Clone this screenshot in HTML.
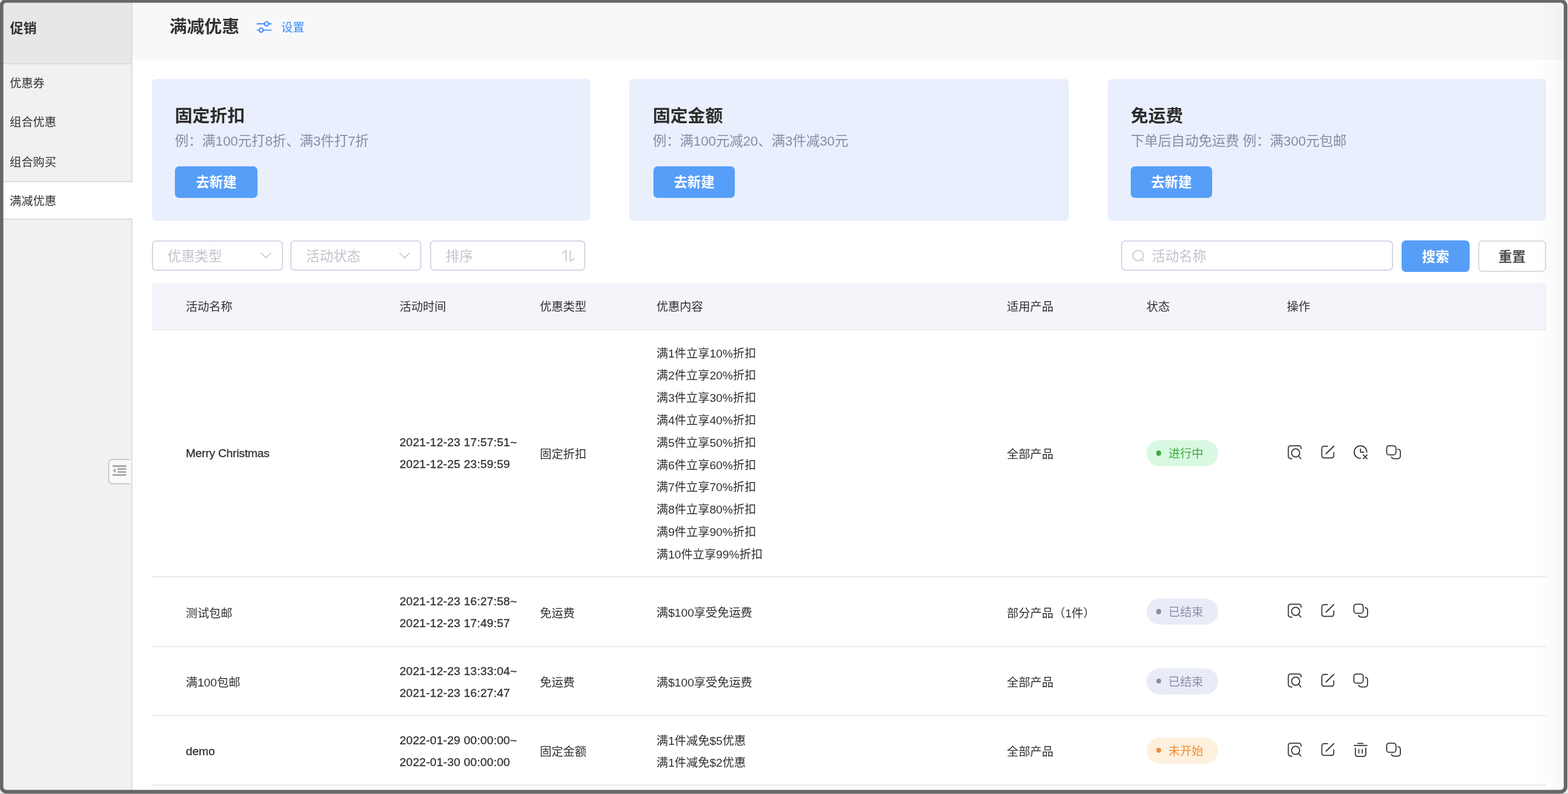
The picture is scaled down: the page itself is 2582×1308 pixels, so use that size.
<!DOCTYPE html>
<html lang="zh-CN">
<head>
<meta charset="utf-8">
<title>满减优惠</title>
<style>
*{box-sizing:border-box;margin:0;padding:0}
html,body{width:2582px;height:1308px;overflow:hidden;background:#f0f0f0}
body{position:relative;font-family:"Liberation Sans","Noto Sans CJK SC",sans-serif;color:#303030;font-size:19.2px}
.abs{position:absolute}
#app{will-change:transform;position:absolute;left:0;top:0;width:2582px;height:1308px;overflow:hidden;background:#fff}
#frame{position:absolute;left:0;top:0;width:2582px;height:1308px;z-index:50;pointer-events:none}
#edge{position:absolute;right:7px;top:0;width:44px;height:1308px;background:linear-gradient(to right,rgba(0,0,0,0),rgba(0,0,0,0.012) 45%,rgba(0,0,0,0.026));z-index:40;pointer-events:none}
/* sidebar */
#side{position:absolute;left:0;top:0;width:218px;height:1308px;background:#f1f1f1;border-right:2px solid #d9dce4}
#side .hd{position:absolute;left:0;top:0;width:216px;height:106px;background:#e8e6e7;border-bottom:2px solid #d9dce4}
#side .hd span{position:absolute;left:16.5px;top:31px;font-size:22px;font-weight:700;line-height:32px;color:#333}
#side .it{position:absolute;left:0;width:216px;height:65px;line-height:66px;padding-left:16px;font-size:19.2px;color:#333}
#side .it.on{width:218px;background:#fff;border-top:2px solid #d9dce4;border-bottom:2px solid #d9dce4;line-height:64px;height:64px}
#fold{position:absolute;left:178px;top:756px;width:36px;height:42px;border:2px solid #c9c9c9;border-right:none;border-radius:7px 3px 3px 7px;background:#f9f9f9}
#fold:after{content:"";position:absolute;left:34px;top:0;width:2px;height:38px;background:#f8f8f8}
/* header */
#top{position:absolute;left:218px;top:0;width:2364px;height:98px;background:#f8f8f8}
#top h1{position:absolute;left:61px;top:23px;font-size:28.8px;line-height:42px;font-weight:700;color:#333}
#top .set{position:absolute;left:245px;top:31px;font-size:19.2px;line-height:30px;color:#3b8cfe}
/* cards */
.card{position:absolute;top:130px;height:234px;background:#e9effd;border-radius:7px}
.card h2{position:absolute;left:38px;top:40px;font-size:28.8px;line-height:42px;font-weight:700;color:#2c2c2c;white-space:nowrap}
.card p{position:absolute;left:38px;top:87px;font-size:22.4px;line-height:32px;color:#878da6;white-space:nowrap;letter-spacing:-.1px}
.btn{position:absolute;background:#579ef8;color:#fff;font-weight:700;font-size:22.4px;text-align:center;border-radius:7px;white-space:nowrap}
.card .btn{left:38px;top:144px;height:52px;line-height:54px;width:134px}
/* filters */
.sel{position:absolute;top:396px;height:50px;border:2px solid #d4d8e4;border-radius:7px;background:#fff;font-size:22.4px;color:#c0c4cc;line-height:49px;padding-left:24px;white-space:nowrap}
.sel svg{position:absolute}
/* table */
#th{position:absolute;left:250px;top:466px;width:2296px;height:78px;background:#f3f5fa;border-bottom:2px solid #ebedf2}
#th span{position:absolute;top:0;line-height:79px;font-size:19.2px;color:#303030;white-space:nowrap}
.row{position:absolute;left:250px;width:2296px;border-bottom:2px solid #e9ebf3}
.c{position:absolute;top:0;bottom:0;display:flex;flex-direction:column;justify-content:center;white-space:nowrap;line-height:36.8px;font-size:19.2px;color:#303030;padding-top:4px}
.c1{left:56px;padding-top:6px}.c3,.c5{padding-top:6px}.c2{left:408px;line-height:36px;padding-top:0;letter-spacing:.2px;-webkit-text-stroke:.3px #303030}.c3{left:639px}.c4{left:831px}.c5{left:1408px}.c6{left:1638px}.row.s .c{padding-top:7px}.row.s .c2{padding-top:3.4px}.row.s .c4{line-height:36px;padding-top:5px}.row.s .c6,.row.s .c7{padding-top:0}
.c6{padding-top:0}.c7{left:1867.5px;padding-top:0}
.pill{display:block;width:118px;height:43px;border-radius:22px;position:relative;font-size:19.2px;line-height:45px;padding-left:36px}
.pill i{position:absolute;left:16px;top:17.3px;width:8.4px;height:8.4px;border-radius:50%}
.pill.g{background:#d9f8e2;color:#43ad3f}.pill.g i{background:#43ad3f}
.pill.e{background:#e9ecf7;color:#8a8fa8}.pill.e i{background:#8a8fa8}
.pill.o{background:#fdf0dd;color:#ef8c34}.pill.o i{background:#ef8c34}
.ops{display:flex;flex-direction:row;height:28px;margin-top:-2.8px}
.ops svg{width:28px;height:28px;margin-right:26.2px;flex:none;overflow:visible}
.ops svg *{fill:none;stroke:#333;stroke-width:1.75;stroke-linecap:round;stroke-linejoin:round}
</style>
</head>
<body>
<div id="app">
  <div id="side">
    <div class="hd"><span>促销</span></div>
    <div class="it" style="top:105px">优惠券</div>
    <div class="it" style="top:169px">组合优惠</div>
    <div class="it" style="top:235px">组合购买</div>
    <div class="it on" style="top:298px">满减优惠</div>
    <div id="fold">
      <svg width="36" height="38" viewBox="0 0 36 38" style="position:absolute;left:0;top:0">
        <rect x="5.4" y="8.3" width="22.5" height="3" fill="#a7a7a7"/>
        <rect x="13.6" y="13.2" width="14.3" height="2.8" fill="#a7a7a7"/>
        <rect x="13.6" y="18.2" width="14.3" height="2.7" fill="#a7a7a7"/>
        <rect x="5.4" y="23" width="22.5" height="2.8" fill="#a7a7a7"/>
        <path d="M5.8 17.2 L10.2 13.1 V21.3 Z" fill="#a7a7a7"/>
      </svg>
    </div>
  </div>

  <div id="top">
    <h1>满减优惠</h1>
    <svg class="abs" style="left:203px;top:33px" width="28" height="24" viewBox="0 0 28 24" fill="none" stroke="#3b8cfe" stroke-width="1.9" stroke-linecap="round">
      <path d="M2.5 6.3H14.3M21.6 6.3H25.5"/><circle cx="18" cy="6.3" r="3.4"/>
      <path d="M2.5 16.6H5.6M12.8 16.6H25.5"/><circle cx="9.2" cy="16.6" r="3.4"/>
    </svg>
    <span class="set">设置</span>
  </div>

  <div class="card" style="left:250px;width:722px">
    <h2>固定折扣</h2><p>例：满100元打8折、满3件打7折</p><div class="btn" style="width:136px">去新建</div>
  </div>
  <div class="card" style="left:1036px;width:724px">
    <h2 style="left:39px">固定金额</h2><p style="left:39px">例：满100元减20、满3件减30元</p><div class="btn" style="left:40px">去新建</div>
  </div>
  <div class="card" style="left:1824px;width:722px">
    <h2>免运费</h2><p>下单后自动免运费 例：满300元包邮</p><div class="btn">去新建</div>
  </div>

  <div class="sel" style="left:250px;width:216px">优惠类型
    <svg style="left:176px;top:17px" width="20" height="12" viewBox="0 0 20 12" fill="none" stroke="#b9bdc8" stroke-width="1.3"><path d="M1.8 1.5 L10 9.8 L18.2 1.5"/></svg>
  </div>
  <div class="sel" style="left:478px;width:216px">活动状态
    <svg style="left:176px;top:17px" width="20" height="12" viewBox="0 0 20 12" fill="none" stroke="#b9bdc8" stroke-width="1.3"><path d="M1.8 1.5 L10 9.8 L18.2 1.5"/></svg>
  </div>
  <div class="sel" style="left:708px;width:256px">排序
    <svg style="left:214px;top:12px" width="24" height="24" viewBox="0 0 24 24" fill="none" stroke="#bcc0ca" stroke-width="1.5"><path d="M2.2 7.4 L8 2.4 V21"/><path d="M15.1 2.4 V20.6 L22 15.4"/></svg>
  </div>
  <div class="sel" style="left:1846px;width:448px;padding-left:48.5px">活动名称
    <svg style="left:15px;top:12px" width="24" height="24" viewBox="0 0 24 24" fill="none" stroke="#bcc0ca" stroke-width="1.5"><circle cx="11" cy="11" r="8.6"/><path d="M17.3 17.3 L20.3 20.3"/></svg>
  </div>
  <div class="btn" style="left:2308px;top:396px;width:112px;height:52px;line-height:55px;font-size:22.4px">搜索</div>
  <div class="btn" style="left:2434px;top:396px;width:112px;height:52px;line-height:51px;font-size:22.4px;background:#fff;border:2px solid #d9dce4;color:#4a4a4a">重置</div>

  <div id="th">
    <span style="left:56px">活动名称</span><span style="left:408px">活动时间</span><span style="left:639px">优惠类型</span><span style="left:831px">优惠内容</span><span style="left:1408px">适用产品</span><span style="left:1638px">状态</span><span style="left:1869px">操作</span>
  </div>

<svg width="0" height="0" style="position:absolute">
  <defs>
    <g id="i-view"><path d="M24.5 8.2V6.8A3.5 3.5 0 0 0 21 3.3H7A3.5 3.5 0 0 0 3.5 6.8V21A3.5 3.5 0 0 0 7 24.5H9.3"/><circle cx="15.5" cy="15.1" r="6.7"/><path d="M20.2 20L24.1 24.5"/></g>
    <g id="i-edit"><path d="M14 4.15H8.1A3.5 3.5 0 0 0 4.6 7.65V19.8A3.5 3.5 0 0 0 8.1 23.3H20.8A3.5 3.5 0 0 0 24.3 19.8V14.4"/><path d="M11.5 16.5L24.4 4"/></g>
    <g id="i-clock"><path d="M24.7 13.8A10.4 10.4 0 1 0 14.3 24.2"/><path d="M14.3 8.6V13.8H19.6"/><path d="M18.9 18.4L25.1 24.6M25.1 18.4L18.9 24.6"/></g>
    <g id="i-copy"><rect x="3.4" y="3.3" width="15.3" height="15.1" rx="4"/><path d="M22 9.1A3.9 3.9 0 0 1 25.9 13V20.6A3.9 3.9 0 0 1 22 24.5H15A3.9 3.9 0 0 1 11.3 21.8"/></g>
    <g id="i-del"><path d="M10.1 3.6H18.4M4 7.2H25"/><path d="M5.9 11.4V21.5A3.5 3.5 0 0 0 9.4 25H19.5A3.5 3.5 0 0 0 23 21.5V11.4"/><path d="M11.5 13.5V19.4M17.2 13.5V19.4"/></g>
  </defs>
</svg>
  <div class="row" style="top:544px;height:407px">
    <div class="c c1" style="letter-spacing:-.2px;padding-top:2px;-webkit-text-stroke:.3px #303030">Merry Christmas</div>
    <div class="c c2"><div>2021-12-23 17:57:51~</div><div>2021-12-25 23:59:59</div></div>
    <div class="c c3">固定折扣</div>
    <div class="c c4"><div>满1件立享10%折扣</div><div>满2件立享20%折扣</div><div>满3件立享30%折扣</div><div>满4件立享40%折扣</div><div>满5件立享50%折扣</div><div>满6件立享60%折扣</div><div>满7件立享70%折扣</div><div>满8件立享80%折扣</div><div>满9件立享90%折扣</div><div>满10件立享99%折扣</div></div>
    <div class="c c5">全部产品</div>
    <div class="c c6"><span class="pill g"><i></i>进行中</span></div>
    <div class="c c7"><div class="ops"><svg viewBox="0 0 28 28"><use href="#i-view"/></svg><svg viewBox="0 0 28 28"><use href="#i-edit"/></svg><svg viewBox="0 0 28 28"><use href="#i-clock"/></svg><svg viewBox="0 0 28 28"><use href="#i-copy"/></svg></div></div>
  </div>
  <div class="row s" style="top:951px;height:115px">
    <div class="c c1">测试包邮</div>
    <div class="c c2"><div>2021-12-23 16:27:58~</div><div>2021-12-23 17:49:57</div></div>
    <div class="c c3">免运费</div>
    <div class="c c4"><div>满$100享受免运费</div></div>
    <div class="c c5">部分产品（1件）</div>
    <div class="c c6"><span class="pill e"><i></i>已结束</span></div>
    <div class="c c7"><div class="ops"><svg viewBox="0 0 28 28"><use href="#i-view"/></svg><svg viewBox="0 0 28 28"><use href="#i-edit"/></svg><svg viewBox="0 0 28 28"><use href="#i-copy"/></svg></div></div>
  </div>
  <div class="row s" style="top:1066px;height:114px">
    <div class="c c1">满100包邮</div>
    <div class="c c2"><div>2021-12-23 13:33:04~</div><div>2021-12-23 16:27:47</div></div>
    <div class="c c3">免运费</div>
    <div class="c c4"><div>满$100享受免运费</div></div>
    <div class="c c5">全部产品</div>
    <div class="c c6"><span class="pill e"><i></i>已结束</span></div>
    <div class="c c7"><div class="ops"><svg viewBox="0 0 28 28"><use href="#i-view"/></svg><svg viewBox="0 0 28 28"><use href="#i-edit"/></svg><svg viewBox="0 0 28 28"><use href="#i-copy"/></svg></div></div>
  </div>
  <div class="row s" style="top:1180px;height:114px">
    <div class="c c1" style="padding-top:5px;-webkit-text-stroke:.3px #303030">demo</div>
    <div class="c c2"><div>2022-01-29 00:00:00~</div><div>2022-01-30 00:00:00</div></div>
    <div class="c c3">固定金额</div>
    <div class="c c4"><div>满1件减免$5优惠</div><div>满1件减免$2优惠</div></div>
    <div class="c c5">全部产品</div>
    <div class="c c6"><span class="pill o"><i></i>未开始</span></div>
    <div class="c c7"><div class="ops"><svg viewBox="0 0 28 28"><use href="#i-view"/></svg><svg viewBox="0 0 28 28"><use href="#i-edit"/></svg><svg viewBox="0 0 28 28"><use href="#i-del"/></svg><svg viewBox="0 0 28 28"><use href="#i-copy"/></svg></div></div>
  </div>
</div>
<div id="edge"></div>
<svg id="frame" viewBox="0 0 2582 1308">
  <path fill="#efefef" fill-rule="evenodd" d="M-5 -5H2590V1315H-5Z M10.5 -1.4H2570A11 11 0 0 1 2581 9.6V1296.3A11 11 0 0 1 2570 1307.3H10.5A11 11 0 0 1 -0.5 1296.3V9.6A11 11 0 0 1 10.5 -1.4Z"/>
  <rect x="0" y="1307" width="2582" height="1" fill="#c2c2c2"/>
  <rect x="2.5" y="1.6" width="2575.5" height="1302.7" rx="8" ry="8" fill="none" stroke="#676767" stroke-width="6"/>
</svg>
</body>
</html>
